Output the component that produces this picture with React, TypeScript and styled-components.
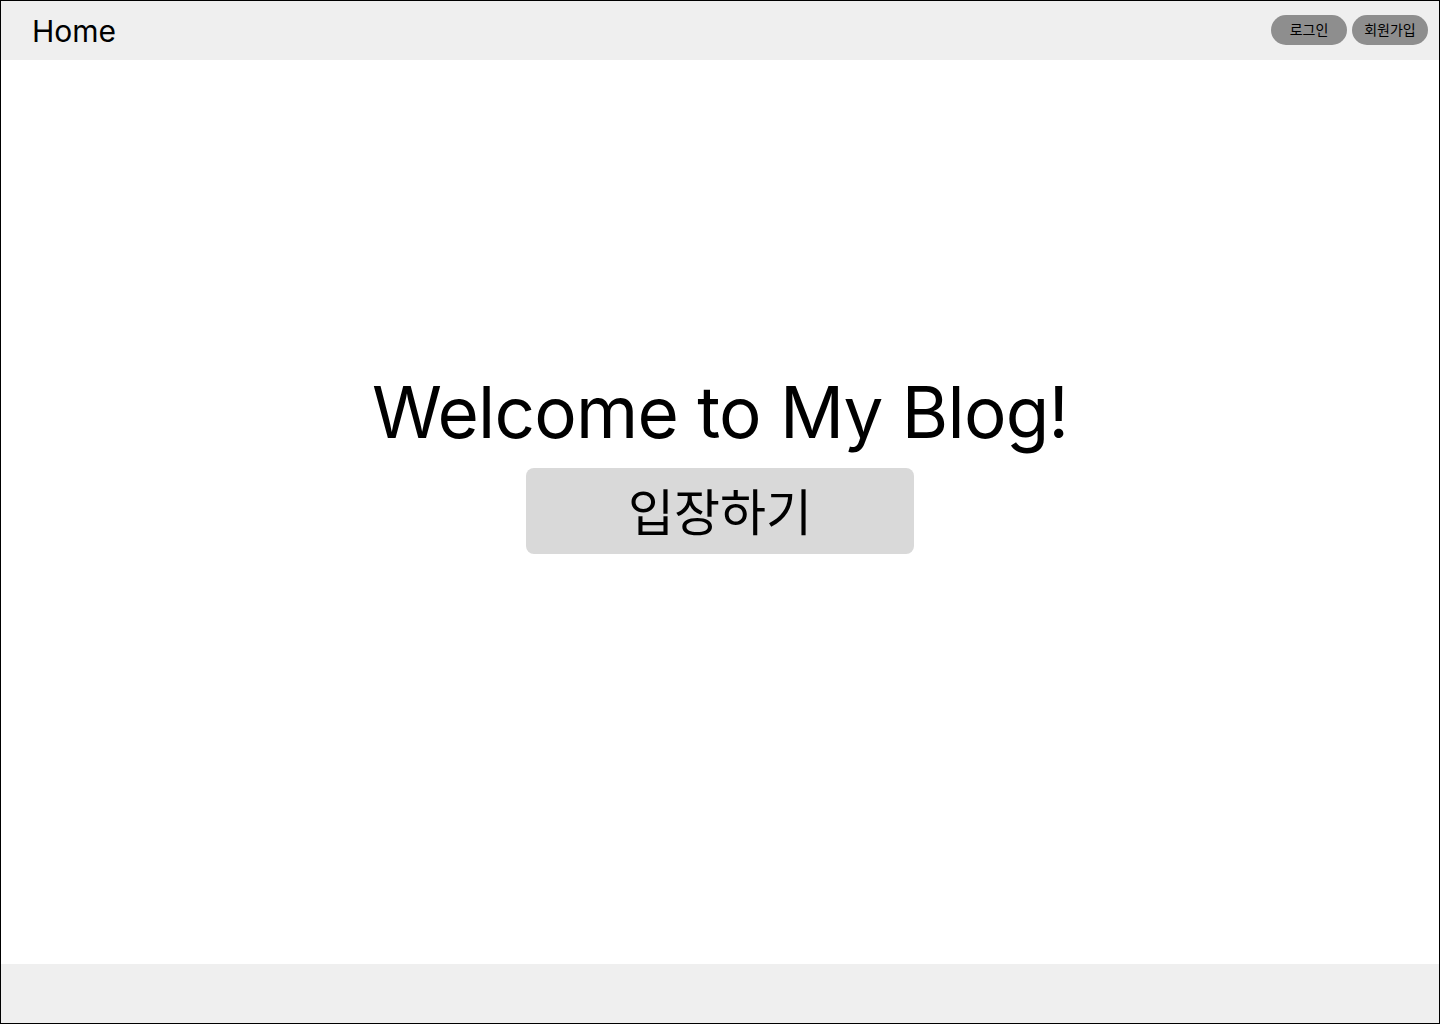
import React from "react";
import styled, { createGlobalStyle } from "styled-components";

const GlobalStyle = createGlobalStyle`
  html, body {
    margin: 0;
    padding: 0;
  }
  body {
    font-family: Inter, "Noto Sans CJK KR", sans-serif;
    color: #000;
    background: #fff;
  }
  * {
    box-sizing: border-box;
  }
`;

const Page = styled.div`
  width: 1440px;
  height: 1024px;
  border: 1px solid #000;
  display: flex;
  flex-direction: column;
  background: #fff;
`;

const Header = styled.header`
  height: 59px;
  background-color: #efefef;
  display: flex;
  align-items: center;
  justify-content: space-between;
  padding: 0 11px 0 31px;
`;

const HomeLink = styled.a`
  font-size: 30px;
  color: #000;
  text-decoration: none;
  font-family: Inter, "Noto Sans CJK KR", sans-serif;
`;

const AuthButtons = styled.div`
  display: flex;
  gap: 5px;
  margin-top: -1px;
`;

const PillButton = styled.button`
  width: 76px;
  height: 30px;
  border: none;
  border-radius: 15px;
  background-color: #8e8e8e;
  color: #000;
  font-family: Inter, "Noto Sans CJK KR", sans-serif;
  font-size: 14px;
  padding: 0 0 2px;
  cursor: pointer;
`;

const Main = styled.main`
  flex: 1;
  display: flex;
  flex-direction: column;
  align-items: center;
  justify-content: center;
  padding-bottom: 93px;
`;

const Title = styled.h1`
  margin: 0;
  font-size: 71px;
  font-weight: 400;
  letter-spacing: -0.8px;
  line-height: 1;
`;

const EnterButton = styled.button`
  margin-top: 20px;
  width: 388px;
  height: 86px;
  border: none;
  border-radius: 8px;
  background-color: #d9d9d9;
  color: #000;
  font-family: Inter, "Noto Sans CJK KR", sans-serif;
  font-size: 50px;
  padding: 0 0 4px;
  cursor: pointer;
`;

const Footer = styled.footer`
  height: 59px;
  background-color: #efefef;
`;

const App: React.FC = () => {
  return (
    <>
      <GlobalStyle />
      <Page>
        <Header>
          <HomeLink href="#">Home</HomeLink>
          <AuthButtons>
            <PillButton>로그인</PillButton>
            <PillButton>회원가입</PillButton>
          </AuthButtons>
        </Header>
        <Main>
          <Title>Welcome to My Blog!</Title>
          <EnterButton>입장하기</EnterButton>
        </Main>
        <Footer />
      </Page>
    </>
  );
};

export default App;
